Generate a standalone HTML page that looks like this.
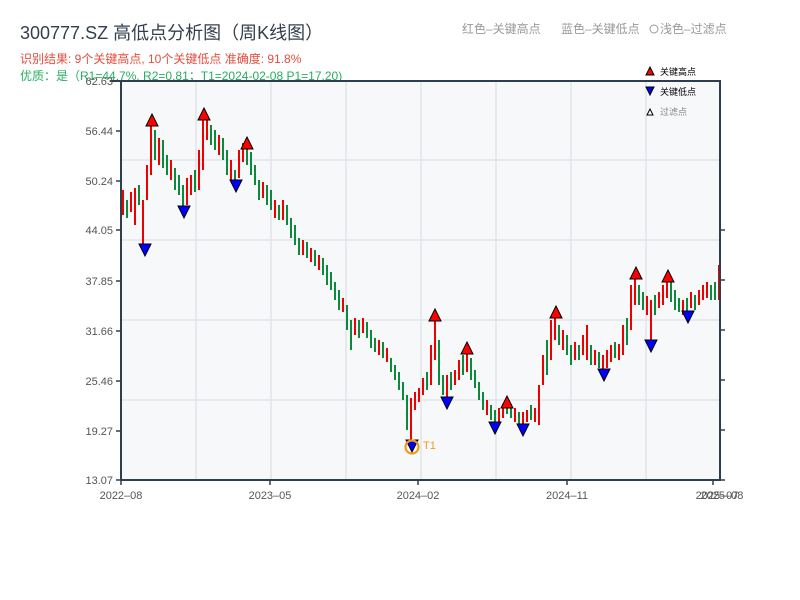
<!DOCTYPE html>
<html><head><meta charset="utf-8"><style>
body{margin:0;width:800px;height:600px;background:#fff;overflow:hidden;font-family:"Liberation Sans","Noto Sans CJK SC",sans-serif}
</style></head><body>
<svg width="800" height="600" xmlns="http://www.w3.org/2000/svg" style="position:absolute;left:0;top:0;font-family:'Liberation Sans','Noto Sans CJK SC',sans-serif">
<text x="20" y="39" font-size="18" fill="#333f4d">300777.SZ 高低点分析图（周K线图）</text>
<text x="20" y="63" font-size="12" fill="#e74c3c">识别结果: 9个关键高点, 10个关键低点  准确度: 91.8%</text>
<text x="20" y="80" font-size="12" fill="#27ae60">优质：是（R1=44.7%, R2=0.81；T1=2024-02-08 P1=17.20)</text>
<text x="462" y="33" font-size="12" fill="#999">红色–关键高点</text>
<text x="561" y="33" font-size="12" fill="#999">蓝色–关键低点</text>
<circle cx="654" cy="29" r="4" fill="none" stroke="#999"/>
<text x="660" y="33" font-size="12" fill="#999">浅色–过滤点</text>
<rect x="121" y="81" width="599" height="399" fill="#f7f8fa"/>
<g stroke="#e1e4ea" stroke-width="1.5">
<line x1="196" y1="81" x2="196" y2="480"/><line x1="271" y1="81" x2="271" y2="480"/><line x1="346" y1="81" x2="346" y2="480"/><line x1="421" y1="81" x2="421" y2="480"/><line x1="496" y1="81" x2="496" y2="480"/><line x1="571" y1="81" x2="571" y2="480"/><line x1="646" y1="81" x2="646" y2="480"/>
<line x1="121" y1="160" x2="720" y2="160"/><line x1="121" y1="240" x2="720" y2="240"/><line x1="121" y1="320" x2="720" y2="320"/><line x1="121" y1="400" x2="720" y2="400"/>
</g>
<path stroke="#e00" stroke-width="2" fill="none" d="M123 190V215M131 192V212M135 188V225M143 200V250M147 165V200M151 125V175M159 138V165M171 160V180M187 178V205M191 175V195M199 150V190M203 118V170M207 118V140M219 135V155M231 160V180M239 150V178M243 143V162M263 182V198M275 200V218M283 200V220M303 240V255M311 248V262M319 255V270M343 298V312M355 318V335M363 318V333M379 340V355M387 348V362M411 398V446M415 392V410M419 388V402M423 378V395M431 345V385M435 318V360M447 375V400M455 370V385M459 360V380M467 350V372M487 400V415M499 408V422M503 404V418M515 408V422M523 412V425M527 410V422M535 408V422M539 385V425M543 355V385M551 320V360M555 315V340M563 330V350M575 342V360M583 335V355M587 325V360M595 350V365M603 355V372M607 350V368M611 345V362M619 344V360M623 325V355M631 285V330M635 278V305M647 296V315M651 300V345M659 292V308M663 285V305M667 278V298M683 300V315M691 292V308M699 290V305M703 285V300M707 282V298M719 265V300"/>
<path stroke="#0a8a3a" stroke-width="2" fill="none" d="M127 200V218M139 185V205M155 130V160M163 140V168M167 155V175M175 168V190M179 175V195M183 185V210M195 170V192M211 125V145M215 130V150M223 138V160M227 150V175M235 170V185M247 145V165M251 152V175M255 165V185M259 180V200M267 185V205M271 190V210M279 205V220M287 205V225M291 218V238M295 225V245M299 238V255M307 242V258M315 250V266M323 258V275M327 265V285M331 272V290M335 282V300M339 290V310M347 305V330M351 320V350M359 320V338M367 322V338M371 330V348M375 338V352M383 342V358M391 358V372M395 365V380M399 372V390M403 382V400M407 395V430M427 372V390M439 340V385M443 375V395M451 372V390M463 355V375M471 358V380M475 370V388M479 382V400M483 392V410M491 405V420M495 410V425M507 400V414M511 404V418M519 412V425M531 405V420M547 340V375M559 325V345M567 335V355M571 345V365M579 345V360M591 345V365M599 352V368M615 342V358M627 318V345M639 285V305M643 292V310M655 295V315M671 282V302M675 290V310M679 298V312M687 298V312M695 295V310M711 285V300M715 282V300"/>
<g stroke="#2c3e50" stroke-width="2" fill="none">
<path d="M121 81V480H720V81H110"/>
</g>
<g stroke="#2c3e50" stroke-width="1.5">
<line x1="116" y1="131" x2="121" y2="131"/><line x1="116" y1="181" x2="121" y2="181"/><line x1="116" y1="230" x2="121" y2="230"/><line x1="116" y1="281" x2="121" y2="281"/><line x1="116" y1="331" x2="121" y2="331"/><line x1="116" y1="381" x2="121" y2="381"/><line x1="116" y1="431" x2="121" y2="431"/><line x1="116" y1="480" x2="121" y2="480"/>
<line x1="720" y1="280" x2="725" y2="280"/><line x1="720" y1="330" x2="725" y2="330"/><line x1="720" y1="380" x2="725" y2="380"/><line x1="720" y1="430" x2="725" y2="430"/><line x1="720" y1="480" x2="725" y2="480"/><line x1="720" y1="230" x2="725" y2="230"/>
<line x1="121" y1="480" x2="121" y2="485"/><line x1="270" y1="480" x2="270" y2="485"/><line x1="418" y1="480" x2="418" y2="485"/><line x1="567" y1="480" x2="567" y2="485"/><line x1="713" y1="480" x2="713" y2="485"/>
</g>
<g font-size="11" fill="#555" text-anchor="end">
<text x="113" y="85">62.63</text><text x="113" y="135">56.44</text><text x="113" y="185">50.24</text><text x="113" y="234">44.05</text><text x="113" y="285">37.85</text><text x="113" y="335">31.66</text><text x="113" y="385">25.46</text><text x="113" y="435">19.27</text><text x="113" y="484">13.07</text>
</g>
<g font-size="11" fill="#555" text-anchor="middle">
<text x="121" y="499">2022–08</text><text x="270" y="499">2023–05</text><text x="418" y="499">2024–02</text><text x="567" y="499">2024–11</text><text x="717" y="499">2025–07</text><text x="722" y="499">2025–08</text>
</g>
<g fill="#f00" stroke="#000" stroke-width="1">
<polygon points="146,126 158,126 152,114"/><polygon points="198,120 210,120 204,108"/><polygon points="241,149 253,149 247,137"/><polygon points="429,321 441,321 435,309"/><polygon points="461,354 473,354 467,342"/><polygon points="501,408 513,408 507,396"/><polygon points="550,318 562,318 556,306"/><polygon points="630,279 642,279 636,267"/><polygon points="662,282 674,282 668,270"/>
</g>
<g fill="#00f" stroke="#000" stroke-width="1">
<polygon points="139,244 151,244 145,256"/><polygon points="178,206 190,206 184,218"/><polygon points="230,180 242,180 236,192"/><polygon points="406,440 418,440 412,452"/><polygon points="441,397 453,397 447,409"/><polygon points="489,422 501,422 495,434"/><polygon points="517,424 529,424 523,436"/><polygon points="598,369 610,369 604,381"/><polygon points="645,340 657,340 651,352"/><polygon points="682,311 694,311 688,323"/>
</g>
<circle cx="412" cy="447" r="6.5" fill="none" stroke="#f39c12" stroke-width="2.2"/>
<text x="423" y="449" font-size="11" fill="#f39c12">T1</text>
<polygon points="646,75 654,75 650,67" fill="#f00" stroke="#000"/>
<text x="660" y="75" font-size="9" fill="#000">关键高点</text>
<polygon points="646,87 654,87 650,95" fill="#00f" stroke="#000"/>
<text x="660" y="95" font-size="9" fill="#000">关键低点</text>
<polygon points="647,115 653,115 650,109" fill="#fff" stroke="#000"/>
<text x="660" y="115" font-size="9" fill="#888">过滤点</text>
</svg>
</body></html>
